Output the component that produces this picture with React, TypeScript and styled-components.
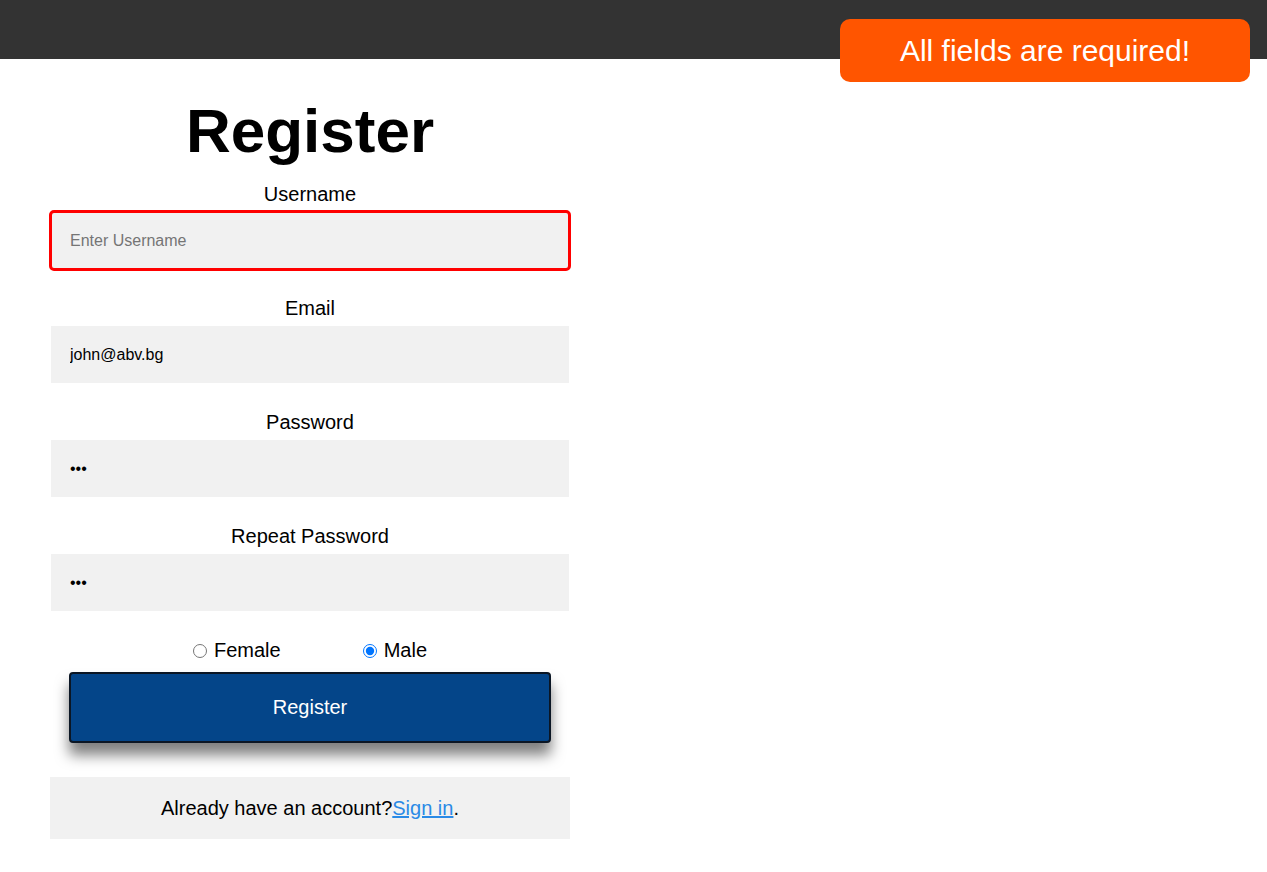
import React from "react";
import styled, { createGlobalStyle } from "styled-components";

const GlobalStyle = createGlobalStyle`
  html, body {
    margin: 0;
    padding: 0;
    background: #ffffff;
    font-family: "Liberation Sans", Arial, sans-serif;
    color: #000;
  }
  * { box-sizing: border-box; }
`;

const Page = styled.div`
  position: relative;
  min-height: 872px;
`;

const Header = styled.header`
  height: 59px;
  background: #333333;
`;

const Toast = styled.div`
  position: absolute;
  top: 19px;
  right: 17px;
  width: 410px;
  height: 63px;
  border-radius: 10px;
  background: #ff5500;
  color: #ffffff;
  font-size: 30px;
  display: flex;
  align-items: center;
  justify-content: center;
`;

const Form = styled.form`
  width: 520px;
  margin-left: 50px;
  display: flex;
  flex-direction: column;
`;

const Title = styled.h1`
  margin: 36px 0 17px;
  font-size: 62px;
  font-weight: 700;
  line-height: 71px;
  text-align: center;
`;

const Field = styled.div`
  display: flex;
  flex-direction: column;
  gap: 6px;
  margin-bottom: 28px;
`;

const Label = styled.label`
  display: block;
  font-size: 20px;
  line-height: 23px;
  text-align: center;
`;

const Input = styled.input<{ $invalid?: boolean }>`
  display: block;
  width: 518px;
  height: 57px;
  margin: 0 1px;
  padding: 0 19px;
  border: none;
  border-radius: ${(p) => (p.$invalid ? "3px" : "0")};
  background: #f1f1f1;
  font-family: inherit;
  font-size: 16px;
  color: #000;
  outline: ${(p) => (p.$invalid ? "3px solid #ff0000" : "none")};
  outline-offset: -1px;

  &::placeholder {
    color: #757575;
  }
`;

const RadioRow = styled.div`
  display: flex;
  justify-content: center;
  align-items: center;
  gap: 82px;
  height: 23px;
  font-size: 20px;
`;

const RadioOption = styled.label`
  display: inline-flex;
  align-items: center;
  gap: 7px;
  line-height: 23px;
`;

const Radio = styled.input`
  width: 14px;
  height: 14px;
  margin: 0;
`;

const SubmitButton = styled.button`
  margin: 10px 19px 0;
  height: 71px;
  border: 2px solid #0b1624;
  border-radius: 4px;
  background: #044589;
  color: #ffffff;
  font-family: inherit;
  font-size: 20px;
  box-shadow: 0 12px 14px rgba(0, 0, 0, 0.5);
  cursor: pointer;
`;

const SignInBox = styled.div`
  margin-top: 34px;
  height: 62px;
  background: #f1f1f1;
  display: flex;
  align-items: center;
  justify-content: center;
  font-size: 20px;
`;

const SignInLink = styled.a`
  color: #2a8ae6;
  text-decoration: underline;
`;

export default function App() {
  return (
    <Page>
      <GlobalStyle />
      <Header />
      <Toast>All fields are required!</Toast>
      <Form onSubmit={(e) => e.preventDefault()}>
        <Title>Register</Title>
        <Field>
          <Label htmlFor="username">Username</Label>
          <Input id="username" type="text" placeholder="Enter Username" $invalid readOnly />
        </Field>
        <Field>
          <Label htmlFor="email">Email</Label>
          <Input id="email" type="text" defaultValue="john@abv.bg" readOnly />
        </Field>
        <Field>
          <Label htmlFor="password">Password</Label>
          <Input id="password" type="password" defaultValue="123" readOnly />
        </Field>
        <Field>
          <Label htmlFor="repass">Repeat Password</Label>
          <Input id="repass" type="password" defaultValue="123" readOnly />
        </Field>
        <RadioRow>
          <RadioOption>
            <Radio type="radio" name="gender" value="female" readOnly />
            Female
          </RadioOption>
          <RadioOption>
            <Radio type="radio" name="gender" value="male" defaultChecked />
            Male
          </RadioOption>
        </RadioRow>
        <SubmitButton type="submit">Register</SubmitButton>
        <SignInBox>
          Already have an account?<SignInLink href="#">Sign in</SignInLink>.
        </SignInBox>
      </Form>
    </Page>
  );
}
